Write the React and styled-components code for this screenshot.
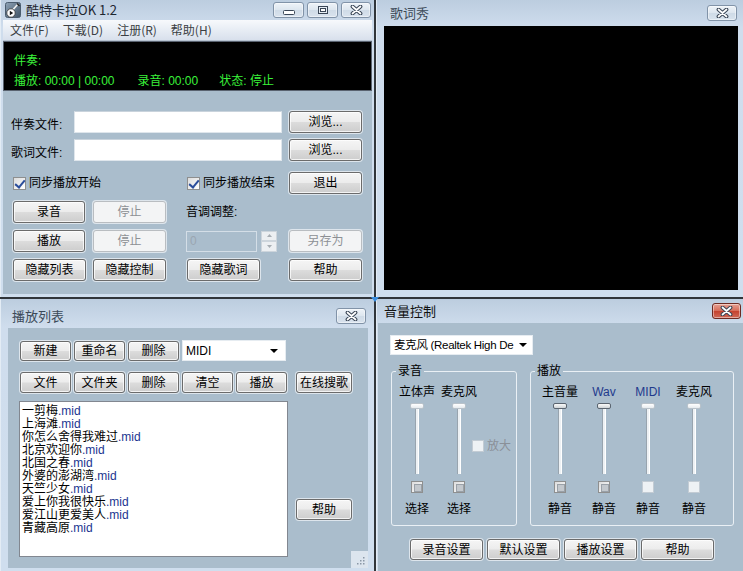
import React from "react";
import styled, { createGlobalStyle } from "styled-components";

const GlobalStyle = createGlobalStyle`
  html, body {
    margin: 0;
    padding: 0;
    background: #2f3337;
  }
  body {
    font-family: "Liberation Sans", "Noto Sans CJK SC", sans-serif;
    font-size: 12px;
    color: #000;
  }
  * {
    box-sizing: border-box;
  }
`;

const songs = [
  "一剪梅",
  "上海滩",
  "你怎么舍得我难过",
  "北京欢迎你",
  "北国之春",
  "外婆的澎湖湾",
  "天竺少女",
  "爱上你我很快乐",
  "爱江山更爱美人",
  "青藏高原",
];

export default function App() {
  return (
    <>
      <GlobalStyle />
      <Desktop>
        <MainWindow />
        <LyricWindow />
        <PlaylistWindow />
        <VolumeWindow />
        <Splitter width="8" height="5" viewBox="0 0 8 5">
          <path d="M0 0 L8 0 L4 5 Z" fill="#3b8fe0" />
        </Splitter>
      </Desktop>
    </>
  );
}

function XGlyph() {
  return (
    <svg width="13" height="10" viewBox="0 0 13 10">
      <path d="M2.5 1.5 L10.5 8.5 M10.5 1.5 L2.5 8.5" stroke="#3a4656" strokeWidth="3.8" strokeLinecap="round" />
      <path d="M2.5 1.5 L10.5 8.5 M10.5 1.5 L2.5 8.5" stroke="#fff" strokeWidth="1.7" strokeLinecap="round" />
    </svg>
  );
}

function AppIcon() {
  return (
    <svg width="16" height="16" viewBox="0 0 16 16">
      <defs>
        <linearGradient id="ai" x1="0" y1="0" x2="1" y2="1">
          <stop offset="0" stopColor="#8fa3b6" />
          <stop offset="1" stopColor="#3f5366" />
        </linearGradient>
      </defs>
      <rect x="0.5" y="0.5" width="15" height="15" rx="2" fill="url(#ai)" stroke="#4a5c6e" />
      <path d="M5 11 L13 2" stroke="#f2f2f2" strokeWidth="1.6" />
      <path d="M12 1.5 L14.5 4" stroke="#222" strokeWidth="1.4" />
      <circle cx="6" cy="11" r="4.2" fill="#fff" stroke="#333" strokeWidth="0.8" />
      <path d="M4.8 8.8 L8.2 11 L4.8 13.2 Z" fill="#111" />
    </svg>
  );
}

function MainWindow() {
  return (
    <Frame>
      <TitleBar $h={20} $pl={4}>
        <AppIcon />
        <MainTitle>酷特卡拉OK 1.2</MainTitle>
        <Captions>
          <CaptionBtn $w={31}>
            <svg width="12" height="6" style={{ marginTop: 5 }}>
              <rect x="0.5" y="0.5" width="11" height="4" rx="1" fill="#fff" stroke="#3a4656" />
            </svg>
          </CaptionBtn>
          <CaptionBtn $w={31}>
            <svg width="10" height="8">
              <rect x="0.5" y="0.5" width="9" height="7" fill="#e6edf4" stroke="#3a4656" />
              <rect x="2.5" y="2.5" width="5" height="3" fill="#fff" stroke="#3a4656" />
            </svg>
          </CaptionBtn>
          <CaptionBtn $w={30}>
            <XGlyph />
          </CaptionBtn>
        </Captions>
      </TitleBar>
      <MainClient>
        <MenuBar>
          <span>文件(F)</span>
          <span>下载(D)</span>
          <span>注册(R)</span>
          <span>帮助(H)</span>
        </MenuBar>
        <Display>
          <span>伴奏:</span>
          <DisplayLine>
            <span>播放: 00:00 | 00:00</span>
            <span>录音: 00:00</span>
            <span>状态: 停止</span>
          </DisplayLine>
        </Display>
        <Form>
          <FileRow>
            <FieldLabel>伴奏文件:</FieldLabel>
            <TextBox />
            <Button>浏览...</Button>
          </FileRow>
          <FileRow $mt={6}>
            <FieldLabel>歌词文件:</FieldLabel>
            <TextBox />
            <Button>浏览...</Button>
          </FileRow>
          <ControlGrid>
            <CheckItem>
              <Check $checked />
              同步播放开始
            </CheckItem>
            <span />
            <CheckItem $ml={1}>
              <Check $checked />
              同步播放结束
            </CheckItem>
            <Button>退出</Button>

            <Button $w={72}>录音</Button>
            <Button disabled>停止</Button>
            <PlainText>音调调整:</PlainText>
            <span />

            <Button $w={72}>播放</Button>
            <Button disabled>停止</Button>
            <SpinWrap>
              <SpinBox>0</SpinBox>
              <SpinButtons>
                <SpinHalf>
                  <svg width="5" height="3"><path d="M0 3 L2.5 0 L5 3 Z" fill="#a7adb3" /></svg>
                </SpinHalf>
                <SpinHalf>
                  <svg width="5" height="3"><path d="M0 0 L2.5 3 L5 0 Z" fill="#a7adb3" /></svg>
                </SpinHalf>
              </SpinButtons>
            </SpinWrap>
            <Button disabled>另存为</Button>

            <Button>隐藏列表</Button>
            <Button>隐藏控制</Button>
            <Button $ml={1}>隐藏歌词</Button>
            <Button>帮助</Button>
          </ControlGrid>
        </Form>
      </MainClient>
    </Frame>
  );
}

function LyricWindow() {
  return (
    <Frame>
      <TitleBar $h={26} $pl={13} $pr={6}>
        <WinTitle $color="#3c4a58">歌词秀</WinTitle>
        <Captions $pr={0}>
          <CaptionBtn $w={30}>
            <XGlyph />
          </CaptionBtn>
        </Captions>
      </TitleBar>
      <LyricScreen />
    </Frame>
  );
}

function PlaylistWindow() {
  return (
    <Frame>
      <TitleBar $h={29} $pl={11} $pr={8} $pt={5}>
        <WinTitle $color="#3c4a58">播放列表</WinTitle>
        <Captions $pr={0}>
          <CaptionBtn $w={30}>
            <XGlyph />
          </CaptionBtn>
        </Captions>
      </TitleBar>
      <PlaylistBody>
        <ButtonRow>
          <Button $w={51} $h={20}>新建</Button>
          <Button $w={51} $h={20}>重命名</Button>
          <Button $w={51} $h={20}>删除</Button>
          <Combo $w={104}>
            <ComboText>MIDI</ComboText>
            <DropArrow />
          </Combo>
        </ButtonRow>
        <ButtonRow $mt={11}>
          <Button $w={51} $h={21}>文件</Button>
          <Button $w={51} $h={21}>文件夹</Button>
          <Button $w={51} $h={21}>删除</Button>
          <Button $w={51} $h={21}>清空</Button>
          <Button $w={51} $h={21}>播放</Button>
          <Button $w={56} $h={21} $ml={6}>在线搜歌</Button>
        </ButtonRow>
        <ListRow>
          <ListBox>
            {songs.map((s) => (
              <ListItem key={s}>
                {s}
                <Ext>.mid</Ext>
              </ListItem>
            ))}
          </ListBox>
          <Button $w={56} $h={21} $mt={98}>帮助</Button>
        </ListRow>
        <Grip width="17" height="17" viewBox="0 0 17 17">
          {[[12, 12], [9, 12], [6, 12], [12, 9], [9, 9], [12, 6]].map(([x, y]) => (
            <rect key={`${x}-${y}`} x={x} y={y} width="1.5" height="1.5" fill="#8a98a6" />
          ))}
        </Grip>
      </PlaylistBody>
    </Frame>
  );
}

const recordCols = [
  { label: "立体声", foot: "选择", gray: true },
  { label: "麦克风", foot: "选择", gray: true },
];

const playCols = [
  { label: "主音量", foot: "静音", active: true, gray: true, w: 44 },
  { label: "Wav", foot: "静音", active: true, gray: true, blue: true, w: 44 },
  { label: "MIDI", foot: "静音", blue: true, w: 44 },
  { label: "麦克风", foot: "静音", w: 48 },
];

function VolumeWindow() {
  return (
    <Frame>
      <TitleBar $h={24} $pl={7} $pr={2}>
        <WinTitle $color="#111">音量控制</WinTitle>
        <Captions $pr={0}>
          <CaptionBtn $w={29} $red>
            <XGlyph />
          </CaptionBtn>
        </Captions>
      </TitleBar>
      <VolumeBody>
        <Combo $w={143} $h={20} $tight>
          <ComboText $narrow>麦克风 (Realtek High De</ComboText>
          <DropArrow />
        </Combo>
        <Groups>
          <Group $w={126}>
            <legend>录音</legend>
            <Columns $pl={4}>
              {recordCols.map((c) => (
                <Channel key={c.label} $w={42} c={c} />
              ))}
              <Amplify>
                <Check $plain />
                放大
              </Amplify>
            </Columns>
          </Group>
          <Group $w={204}>
            <legend>播放</legend>
            <Columns $pl={7}>
              {playCols.map((c) => (
                <Channel key={c.label} $w={c.w} c={c} />
              ))}
            </Columns>
          </Group>
        </Groups>
        <BottomButtons>
          <Button $h={21}>录音设置</Button>
          <Button $h={21}>默认设置</Button>
          <Button $h={21}>播放设置</Button>
          <Button $h={21}>帮助</Button>
        </BottomButtons>
      </VolumeBody>
    </Frame>
  );
}

function Channel({ c, $w }) {
  return (
    <ChannelCol $w={$w}>
      <ChannelLabel $blue={c.blue}>{c.label}</ChannelLabel>
      <Slider>
        <Track />
        <Thumb $active={c.active} />
      </Slider>
      <Check $gray={c.gray} $plain={!c.gray} $mt={6} />
      <ChannelFoot>{c.foot}</ChannelFoot>
    </ChannelCol>
  );
}

const Desktop = styled.div`
  position: relative;
  width: 743px;
  height: 571px;
  overflow: hidden;
  display: grid;
  grid-template-columns: 374px 367px;
  grid-template-rows: 297px 272px;
  gap: 2px;
  background: #30353a;
`;

const Splitter = styled.svg`
  position: absolute;
  left: 371px;
  top: 297px;
`;

const Frame = styled.div`
  display: flex;
  flex-direction: column;
  min-width: 0;
  overflow: hidden;
  background: linear-gradient(180deg, #bccddf 0px, #cfdded 28px, #cfdeee 100%);
  border-left: 1px solid #e3ecf5;
`;

const TitleBar = styled.div`
  display: flex;
  align-items: center;
  height: ${(p) => p.$h}px;
  padding: ${(p) => p.$pt || 0}px ${(p) => p.$pr || 0}px 0 ${(p) => p.$pl || 0}px;
  flex-shrink: 0;
`;

const MainTitle = styled.span`
  margin-left: 5px;
  font-family: "Noto Sans CJK SC", "Liberation Sans", sans-serif;
  font-size: 13px;
  color: #1d2630;
  line-height: 16px;
`;

const WinTitle = styled.span`
  font-family: "Noto Sans CJK SC", "Liberation Sans", sans-serif;
  font-size: 13px;
  line-height: 16px;
  color: ${(p) => p.$color};
`;

const Captions = styled.div`
  display: flex;
  gap: 3px;
  margin-left: auto;
  padding-right: ${(p) => (p.$pr === undefined ? 3 : p.$pr)}px;
`;

const CaptionBtn = styled.div`
  width: ${(p) => p.$w}px;
  height: 16px;
  display: flex;
  align-items: center;
  justify-content: center;
  border-radius: 3px;
  border: 1px solid ${(p) => (p.$red ? "#6d2a22" : "#8193a8")};
  background: ${(p) =>
    p.$red
      ? "linear-gradient(180deg, #e6a193 0%, #d66d5a 48%, #c5422f 52%, #cf6a58 100%)"
      : "linear-gradient(180deg, #eef3f8 0%, #dde6ef 50%, #cfdbe7 52%, #d9e3ee 100%)"};
  box-shadow: inset 0 0 0 1px rgba(255, 255, 255, 0.45);
`;

const MainClient = styled.div`
  flex: 1;
  display: flex;
  flex-direction: column;
  margin: 0 2px 3px 2px;
`;

const MenuBar = styled.div`
  display: flex;
  gap: 14px;
  height: 21px;
  align-items: center;
  padding-left: 7px;
  background: linear-gradient(180deg, #f7f9fc 0%, #e9eef5 45%, #d8e0ec 100%);
  border-bottom: 1px solid #b7c3d1;
  font-family: "Noto Sans CJK SC", "Liberation Sans", sans-serif;
  font-size: 12px;
  color: #3b3f44;
  line-height: 14px;
`;

const Display = styled.div`
  height: 50px;
  background: #000;
  border: 1px solid #5a6370;
  padding: 12px 0 0 10px;
  display: flex;
  flex-direction: column;
  gap: 6px;
  color: #3af23a;
  font-size: 12px;
  line-height: 14px;
`;

const DisplayLine = styled.div`
  display: flex;
  gap: 23px;
  span:nth-child(3) {
    margin-left: -2px;
  }
`;

const Form = styled.div`
  flex: 1;
  background: #aabdcc;
  padding: 20px 0 0 8px;
`;

const FileRow = styled.div`
  display: flex;
  align-items: center;
  margin-top: ${(p) => p.$mt || 0}px;
`;

const FieldLabel = styled.span`
  width: 63px;
  padding-top: 5px;
  font-size: 12px;
  line-height: 14px;
`;

const TextBox = styled.div`
  width: 208px;
  height: 22px;
  margin-right: 7px;
  background: #fff;
  border: 1px solid #dfe6ec;
  border-top-color: #c9d3dc;
`;

const Button = styled.button`
  width: ${(p) => p.$w || 73}px;
  height: ${(p) => p.$h || 22}px;
  margin-left: ${(p) => p.$ml || 0}px;
  margin-top: ${(p) => p.$mt || 0}px;
  padding: 0;
  flex-shrink: 0;
  font-family: "Liberation Sans", "Noto Sans CJK SC", sans-serif;
  font-size: 12px;
  line-height: 14px;
  color: #000;
  border: 1px solid #6b6b6b;
  border-radius: 3px;
  background: linear-gradient(180deg, #f5f5f5 0%, #ececec 48%, #dcdcdc 52%, #cdcdcd 100%);
  box-shadow: inset 0 0 0 1px rgba(255, 255, 255, 0.75), 0 0 0 1px #dde5ec;
  &:disabled {
    color: #8d9094;
    border-color: #b9bdc1;
    background: #f3f4f5;
    box-shadow: 0 0 0 1px #dde5ec;
  }
`;

const ControlGrid = styled.div`
  display: grid;
  grid-template-columns: 80px 93px 103px 73px;
  grid-template-rows: repeat(4, 22px);
  row-gap: 7px;
  align-items: center;
  justify-items: start;
  margin: 11px 0 0 2px;
`;

const CheckItem = styled.label`
  display: flex;
  align-items: center;
  gap: 3px;
  margin-left: ${(p) => p.$ml || 0}px;
  font-size: 12px;
  line-height: 14px;
  white-space: nowrap;
`;

const Check = styled.span`
  position: relative;
  display: inline-block;
  width: ${(p) => (p.$gray || p.$plain ? 12 : 13)}px;
  height: ${(p) => (p.$gray || p.$plain ? 12 : 13)}px;
  margin-top: ${(p) => p.$mt || 0}px;
  flex-shrink: 0;
  border: 1px solid ${(p) => (p.$plain ? "#c3ccd4" : "#8e8f8f")};
  background: ${(p) =>
    p.$plain ? "#eef2f5" : "linear-gradient(135deg, #dcdcdc, #ffffff)"};
  &::after {
    content: "";
    position: absolute;
    display: ${(p) => (p.$checked || p.$gray ? "block" : "none")};
    ${(p) =>
      p.$checked
        ? `left: 3px; top: 0px; width: 4px; height: 8px;
           border: solid #2a4d9b; border-width: 0 2px 2px 0; transform: rotate(40deg);`
        : `left: 2px; top: 2px; width: 6px; height: 6px;
           background: #c3c8cd; border: 1px solid #9aa1a8;`}
  }
`;

const PlainText = styled.span`
  font-size: 12px;
  line-height: 14px;
`;

const SpinWrap = styled.div`
  display: flex;
  gap: 4px;
`;

const SpinBox = styled.div`
  width: 71px;
  height: 21px;
  border: 1px solid #d4dee7;
  padding: 2px 0 0 3px;
  color: #9aa6b1;
  font-size: 12px;
  line-height: 14px;
`;

const SpinButtons = styled.div`
  display: flex;
  flex-direction: column;
  width: 16px;
  height: 21px;
`;

const SpinHalf = styled.div`
  flex: 1;
  display: flex;
  align-items: center;
  justify-content: center;
  background: #eceff2;
  border: 1px solid #cdd5dc;
`;

const LyricScreen = styled.div`
  flex: 1;
  margin: 0 5px 7px 7px;
  background: #000;
`;

const PlaylistBody = styled.div`
  position: relative;
  flex: 1;
  margin: 0 6px 3px 7px;
  background: #aabdcc;
  padding: 12px 0 0 12px;
`;

const ButtonRow = styled.div`
  display: flex;
  align-items: center;
  gap: 3px;
  margin-top: ${(p) => p.$mt || 0}px;
`;

const Combo = styled.div`
  width: ${(p) => p.$w}px;
  height: ${(p) => p.$h || 21}px;
  display: flex;
  align-items: center;
  gap: ${(p) => (p.$tight ? 4 : 6)}px;
  padding: 0 ${(p) => (p.$tight ? 5 : 7)}px 0 3px;
  background: #fff;
  border: 1px solid #e6ecf1;
`;

const ComboText = styled.span`
  flex: 1;
  min-width: 0;
  overflow: hidden;
  white-space: nowrap;
  font-family: "Liberation Sans", "Noto Sans CJK SC", sans-serif;
  font-size: ${(p) => (p.$narrow ? 11.5 : 12)}px;
  line-height: 14px;
  letter-spacing: ${(p) => (p.$narrow ? "-0.3px" : "0")};
`;

const DropArrow = styled.span`
  width: 0;
  height: 0;
  flex-shrink: 0;
  border-left: 4px solid transparent;
  border-right: 4px solid transparent;
  border-top: 4px solid #000;
`;

const ListRow = styled.div`
  display: flex;
  align-items: flex-start;
  gap: 8px;
  margin: 8px 0 0 -1px;
`;

const ListBox = styled.div`
  width: 269px;
  height: 156px;
  background: #fff;
  border: 1px solid #828790;
  padding: 1px 0 0 2px;
`;

const ListItem = styled.div`
  font-family: "Noto Sans CJK SC", sans-serif;
  font-size: 12px;
  line-height: 13px;
  height: 13px;
  color: #000;
  white-space: nowrap;
`;

const Ext = styled.span`
  font-family: "Liberation Sans", sans-serif;
  font-size: 12px;
  color: #1b3590;
`;

const Grip = styled.svg`
  position: absolute;
  right: 0;
  bottom: 0;
  background: #dce5ee;
`;

const VolumeBody = styled.div`
  flex: 1;
  margin-left: 1px;
  background: #aabdcc;
  padding: 12px 0 0 12px;
`;

const Groups = styled.div`
  display: flex;
  gap: 13px;
  margin: 9px 0 0 1px;
`;

const Group = styled.fieldset`
  width: ${(p) => p.$w}px;
  height: 162px;
  margin: 0;
  padding: 0;
  border: 1px solid #eaf0f5;
  border-radius: 3px;
  legend {
    margin-left: 4px;
    padding: 0 2px;
    font-size: 12px;
    line-height: 14px;
  }
`;

const Columns = styled.div`
  display: flex;
  padding: 7px 0 0 ${(p) => p.$pl}px;
`;

const ChannelCol = styled.div`
  width: ${(p) => p.$w}px;
  display: flex;
  flex-direction: column;
  align-items: center;
  flex-shrink: 0;
`;

const ChannelLabel = styled.span`
  font-size: 12px;
  line-height: 14px;
  color: ${(p) => (p.$blue ? "#1f3a8c" : "#000")};
  white-space: nowrap;
`;

const Slider = styled.div`
  position: relative;
  width: 16px;
  height: 72px;
  margin-top: 4px;
  display: flex;
  justify-content: center;
`;

const Track = styled.div`
  width: 4px;
  height: 66px;
  margin-top: 5px;
  background: #edf1f4;
  border-left: 1px solid #98a4ae;
  border-right: 1px solid #ffffff;
`;

const Thumb = styled.div`
  position: absolute;
  top: 0;
  left: 1px;
  width: 14px;
  height: 6px;
  border-radius: 2px;
  border: 1px solid ${(p) => (p.$active ? "#5b6570" : "#b9c2ca")};
  background: ${(p) =>
    p.$active ? "linear-gradient(180deg, #fafafa, #cfd4d8)" : "linear-gradient(180deg, #ffffff, #e6ebef)"};
`;

const ChannelFoot = styled.span`
  margin-top: 9px;
  font-size: 12px;
  line-height: 14px;
`;

const Amplify = styled.label`
  display: flex;
  align-items: center;
  gap: 3px;
  height: 14px;
  margin: 54px 0 0 -8px;
  color: #8a9098;
  font-size: 12px;
  line-height: 14px;
  white-space: nowrap;
`;

const BottomButtons = styled.div`
  display: flex;
  gap: 4px;
  margin: 13px 0 0 20px;
`;
